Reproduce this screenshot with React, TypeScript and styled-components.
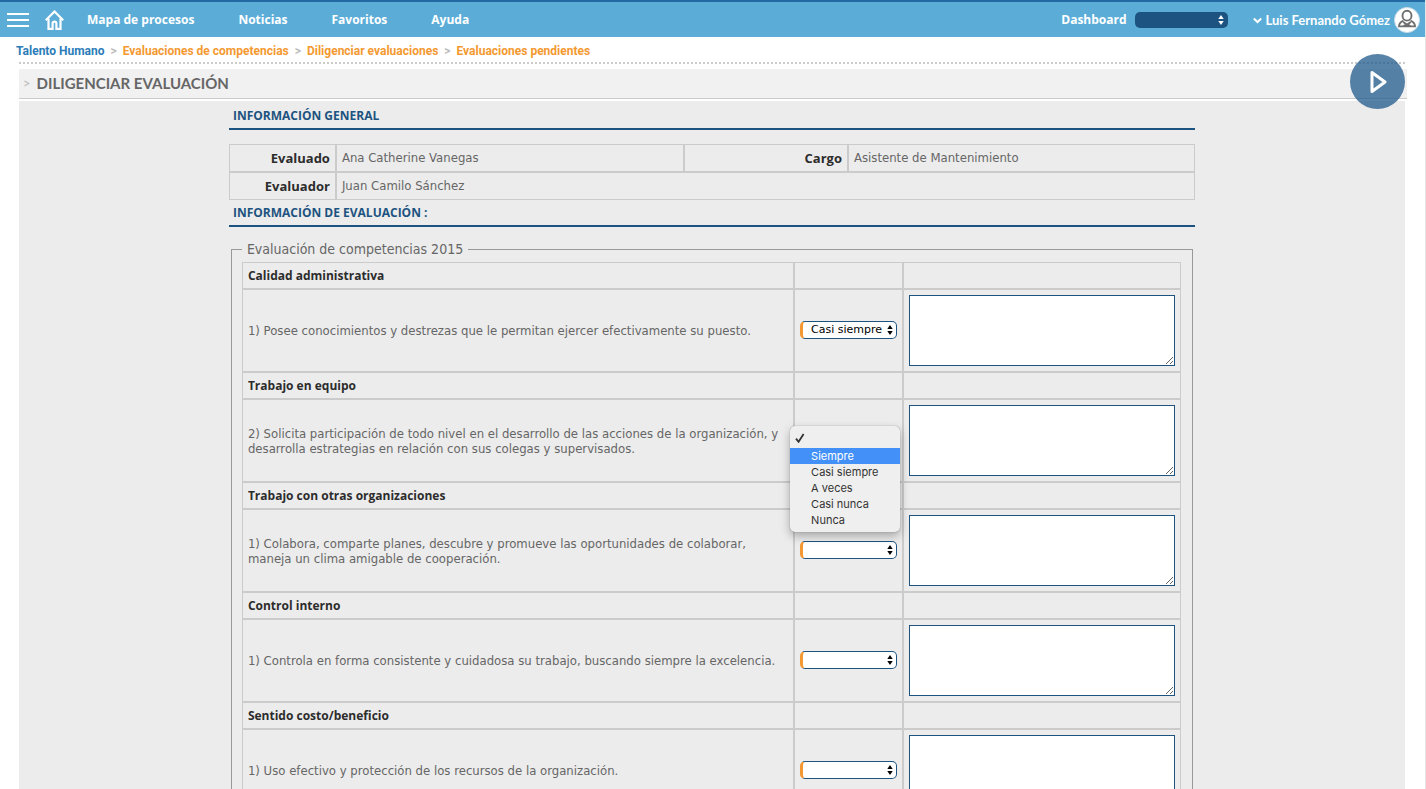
import React, { useState } from 'react';
import styled, { createGlobalStyle } from 'styled-components';

const fonts = {
  body: '"DejaVu Sans Condensed", "DejaVu Sans", sans-serif',
  strong: '"Open Sans", sans-serif',
  title: 'Lato, sans-serif',
  crumb: 'Roboto, sans-serif',
  control: '"DejaVu Sans", Verdana, sans-serif',
  menu: 'Inter, sans-serif',
};

const colors = {
  bar: '#5badd8',
  barEdge: '#2369a4',
  navy: '#1d5380',
  link: '#2b7cb8',
  orange: '#f49931',
  line: '#cbcbcb',
  panel: '#ececec',
  text: '#666666',
  dark: '#2c2c2c',
};

const GlobalStyle = createGlobalStyle`
  *, *::before, *::after { box-sizing: border-box; }
  body { margin: 0; background: #fff; }
`;

const Page = styled.div`
  position: relative;
  height: 100vh;
  overflow-x: hidden;
  overflow-y: auto;
  scrollbar-width: none;
  border-right: 1px solid #e4e4e4;
  font: 13px/15px ${fonts.body};
  color: ${colors.text};
`;

const TopBar = styled.header`
  display: flex;
  align-items: center;
  justify-content: space-between;
  height: 37px;
  padding: 1px 5px 0 7px;
  border-top: 2px solid ${colors.barEdge};
  background: ${colors.bar};
  color: #fff;
  font: 700 13px/16px ${fonts.title};
`;

const BarGroup = styled.div`
  display: flex;
  align-items: center;
`;

const IconButton = styled.button`
  display: flex;
  margin: 0 16px 0 0;
  padding: 0;
  border: 0;
  background: none;
  color: #fff;
  cursor: pointer;
`;

const Nav = styled.nav`
  display: flex;
  gap: 44px;
  padding-left: 7px;
  font: 700 12px/16px ${fonts.strong};
`;

const NavLink = styled.a`
  color: #fff;
  text-decoration: none;
`;

const DashboardLabel = styled.label`
  margin-right: 8px;
  font: 700 12px/16px ${fonts.strong};
`;

const SelectBox = styled.span<{ $width: number }>`
  position: relative;
  display: flex;
  width: ${({ $width }) => $width}px;
`;

const AnswerBox = styled(SelectBox)`
  margin-bottom: 2px;
`;

const DashboardSelect = styled.select`
  appearance: none;
  width: 100%;
  height: 16px;
  margin: 0;
  border: 0;
  border-radius: 5px;
  background: ${colors.navy};
  color: #fff;
  font: 11px/16px ${fonts.control};
`;

const AnswerSelect = styled.select`
  appearance: none;
  width: 100%;
  height: 18px;
  margin: 0;
  padding: 0 0 0 8px;
  border: 1px solid ${colors.navy};
  border-left: 3px solid ${colors.orange};
  border-radius: 5px;
  background: #fff;
  color: #000;
  font: 11px/16px ${fonts.control};
`;

const ArrowsSvg = styled.svg`
  position: absolute;
  top: 50%;
  right: 4px;
  transform: translateY(-50%);
  pointer-events: none;
`;

const UserButton = styled.button`
  display: flex;
  align-items: center;
  gap: 4px;
  margin: 0 0 0 25px;
  padding: 0;
  border: 0;
  background: none;
  color: #fff;
  font: 700 13px/16px ${fonts.title};
  cursor: pointer;
`;

const Breadcrumb = styled.nav`
  display: flex;
  gap: 6px;
  height: 27px;
  margin: 0 20px 0 19px;
  padding-top: 5px;
  border-bottom: 2px dotted ${colors.line};
  color: #bdbdbd;
  font: 700 12px/18px ${fonts.crumb};
`;

const Crumb = styled.a<{ $root?: boolean }>`
  margin-left: ${({ $root }) => ($root ? -3 : 0)}px;
  color: ${({ $root }) => ($root ? colors.link : colors.orange)};
  text-decoration: none;
`;

const TitleBar = styled.div`
  display: flex;
  align-items: center;
  gap: 6px;
  height: 30px;
  margin: 5px 18px 2px 19px;
  padding: 0 0 2px 4px;
  border-bottom: 1px solid ${colors.line};
  background: #f1f1f1;
  color: #c4c4c4;
  font: 700 13px/18px ${fonts.title};
`;

const Title = styled.h1`
  margin: 0;
  color: ${colors.text};
  font: 700 15px/20px ${fonts.title};
`;

const Panel = styled.main`
  margin: 0 20px 0 19px;
  padding-top: 2px;
  background: ${colors.panel};
`;

const Content = styled.div`
  width: 70%;
  margin: 0 auto;
  padding: 0 2px 12px;
`;

const SectionTitle = styled.h2`
  height: 27px;
  margin: 0;
  padding: 5px 4px 0;
  border-bottom: 2px solid ${colors.navy};
  color: ${colors.navy};
  font: 700 12px/16px ${fonts.strong};
`;

const GridTable = styled.table`
  width: 100%;
  table-layout: fixed;
  border-collapse: separate;
  border-spacing: 0;
  border: 0;
`;

const InfoTable = styled(GridTable)`
  margin-top: 14px;
`;

const Col = styled.col<{ $width?: string }>`
  width: ${({ $width }) => $width ?? 'auto'};
`;

const Cell = styled.td`
  padding: 5px;
  border: 1px solid ${colors.line};
  vertical-align: middle;
`;

const InfoCell = styled(Cell)`
  height: 28px;
  padding: 4px 5px 6px;
`;

const InfoLabel = styled.th`
  height: 28px;
  padding: 5px;
  border: 1px solid ${colors.line};
  color: ${colors.dark};
  text-align: right;
  font: 700 13px/16px ${fonts.strong};
`;

const Evaluation = styled.fieldset`
  min-width: 0;
  margin: 14px 2px 0;
  padding: 5px 11px 10px 10px;
  border: 1px solid #999;
`;

const Legend = styled.legend`
  padding: 0 5px;
  font: 14px/16px ${fonts.body};
`;

const CategoryCell = styled.th`
  height: 27px;
  padding: 5px;
  border: 1px solid ${colors.line};
  color: ${colors.dark};
  text-align: left;
  font: 700 12px/15px ${fonts.strong};
`;

const Comment = styled.textarea`
  display: block;
  width: 100%;
  height: 71px;
  margin: 0;
  padding: 2px;
  border: 1px solid ${colors.navy};
  border-radius: 0;
  background: #fff;
  font: 11px/14px ${fonts.control};
`;

const Menu = styled.ul`
  position: absolute;
  z-index: 2;
  top: -5px;
  left: -10px;
  width: 110px;
  margin: 0;
  padding: 2px 0 4px;
  border-radius: 5px;
  background: #efefef;
  box-shadow: 0 0 1px rgba(0, 0, 0, 0.45), 0 4px 10px rgba(0, 0, 0, 0.3);
  color: #333;
  font: 11px/16px ${fonts.menu};
  list-style: none;
`;

const MenuItem = styled.li<{ $active?: boolean }>`
  display: flex;
  align-items: center;
  height: 16px;
  padding-left: 21px;
  background: ${({ $active }) => ($active ? '#4391f8' : 'transparent')};
  color: ${({ $active }) => ($active ? '#fff' : 'inherit')};
`;

const CheckItem = styled(MenuItem)`
  height: 20px;
  padding-left: 5px;
`;

const NextButton = styled.button`
  position: absolute;
  z-index: 3;
  top: 54px;
  right: 20px;
  display: flex;
  align-items: center;
  justify-content: center;
  width: 55px;
  height: 55px;
  padding: 0;
  border: 0;
  border-radius: 50%;
  background: rgba(31, 90, 139, 0.75);
  cursor: pointer;
`;

function Arrows({ color }: { color: string }) {
  return (
    <ArrowsSvg width="6" height="10" viewBox="0 0 6 10" fill={color} aria-hidden="true">
      <path d="M3 0 5.700 4H.3zM3 10 .3 6h5.400z" />
    </ArrowsSvg>
  );
}

const answers = ['Siempre', 'Casi siempre', 'A veces', 'Casi nunca', 'Nunca'];

const crumbs = ['Talento Humano', 'Evaluaciones de competencias', 'Diligenciar evaluaciones', 'Evaluaciones pendientes'];

const questions = [
  {
    category: 'Calidad administrativa',
    text: '1) Posee conocimientos y destrezas que le permitan ejercer efectivamente su puesto.',
    answer: 'Casi siempre',
  },
  {
    category: 'Trabajo en equipo',
    text: '2) Solicita participación de todo nivel en el desarrollo de las acciones de la organización, y desarrolla estrategias en relación con sus colegas y supervisados.',
    answer: '',
    open: true,
  },
  {
    category: 'Trabajo con otras organizaciones',
    text: '1) Colabora, comparte planes, descubre y promueve las oportunidades de colaborar, maneja un clima amigable de cooperación.',
    answer: '',
  },
  {
    category: 'Control interno',
    text: '1) Controla en forma consistente y cuidadosa su trabajo, buscando siempre la excelencia.',
    answer: '',
  },
  {
    category: 'Sentido costo/beneficio',
    text: '1) Uso efectivo y protección de los recursos de la organización.',
    answer: '',
  },
];

function Question({ index, category, text, answer, open }: {
  index: number;
  category: string;
  text: string;
  answer: string;
  open?: boolean;
}) {
  const [value, setValue] = useState(answer);
  const id = `respuesta-${index}`;
  return (
    <>
      <tr>
        <CategoryCell scope="row">{category}</CategoryCell>
        <Cell />
        <Cell />
      </tr>
      <tr>
        <Cell>
          <label htmlFor={id}>{text}</label>
        </Cell>
        <Cell>
          <AnswerBox $width={97}>
            <AnswerSelect id={id} value={value} onChange={(e) => setValue(e.target.value)}>
              <option value="" />
              {answers.map((a) => (
                <option key={a}>{a}</option>
              ))}
            </AnswerSelect>
            <Arrows color="#000" />
            {open && (
              <Menu role="listbox" aria-label={category}>
                <CheckItem role="option" aria-selected="true" aria-label="Sin respuesta">
                  <svg width="10" height="10" viewBox="0 0 10 10" fill="none" stroke="#333" strokeWidth="1.8" aria-hidden="true">
                    <path d="M1 5.6 3.6 8.8 8.6 1" />
                  </svg>
                </CheckItem>
                {answers.map((a, i) => (
                  <MenuItem key={a} role="option" aria-selected="false" $active={i === 0}>
                    {a}
                  </MenuItem>
                ))}
              </Menu>
            )}
          </AnswerBox>
        </Cell>
        <Cell>
          <Comment aria-label={`Comentario: ${category}`} />
        </Cell>
      </tr>
    </>
  );
}

export default function App() {
  return (
    <Page>
      <GlobalStyle />
      <TopBar>
        <BarGroup>
          <IconButton aria-label="Menú">
            <svg width="22" height="16" viewBox="0 0 22 16" fill="currentColor" aria-hidden="true">
              <path d="M0 1h22v2H0zM0 7h22v2H0zM0 13h22v2H0z" />
            </svg>
          </IconButton>
          <IconButton aria-label="Inicio">
            <svg width="19" height="20" viewBox="0 0 19 20" fill="none" stroke="currentColor" strokeWidth="2.2" aria-hidden="true">
              <path d="M.8 10.200 9.500 1.500l8.700 8.700" />
              <path d="M3.500 8.500V18.800H7.600V13.500q0-1.800 1.900-1.800t1.900 1.800V18.800h4.100V8.500" />
            </svg>
          </IconButton>
          <Nav>
            {['Mapa de procesos', 'Noticias', 'Favoritos', 'Ayuda'].map((n) => (
              <NavLink key={n} href="#">{n}</NavLink>
            ))}
          </Nav>
        </BarGroup>
        <BarGroup>
          <DashboardLabel htmlFor="dashboard">Dashboard</DashboardLabel>
          <SelectBox $width={93}>
            <DashboardSelect id="dashboard">
              <option />
            </DashboardSelect>
            <Arrows color="#fff" />
          </SelectBox>
          <UserButton>
            <svg width="9" height="8" viewBox="0 0 9 8" fill="none" stroke="#fff" strokeWidth="2" aria-hidden="true">
              <path d="m.8 2.500 3.700 3.500 3.700-3.500" />
            </svg>
            Luis Fernando Gómez
            <svg width="26" height="26" viewBox="0 0 26 26" aria-hidden="true">
              <circle cx="13" cy="13" r="12.5" fill="#fff" stroke="#c9dbe6" />
              <g fill="none" stroke="#6f6f6f" strokeWidth="1.9">
                <ellipse cx="13" cy="8.700" rx="4.500" ry="4.900" />
                <path d="M9.500 13.600C6 15 5 16.300 5 19.400h16c0-3.100-1-4.400-4.500-5.800" />
                <path d="m9.300 15 3.700 2.700 3.700-2.700M9.500 19l3.500-1.600 3.500 1.600" />
              </g>
            </svg>
          </UserButton>
        </BarGroup>
      </TopBar>
      <Breadcrumb aria-label="Ruta">
        {crumbs.map((c, i) => (
          <React.Fragment key={c}>
            {i > 0 && <span>&gt;</span>}
            <Crumb href="#" $root={i === 0}>{c}</Crumb>
          </React.Fragment>
        ))}
      </Breadcrumb>
      <TitleBar>
        <span>&gt;</span>
        <Title>DILIGENCIAR EVALUACIÓN</Title>
      </TitleBar>
      <Panel>
        <Content>
          <SectionTitle>INFORMACIÓN GENERAL</SectionTitle>
          <InfoTable>
            <colgroup>
              <Col $width="107px" />
              <Col $width="36%" />
              <Col $width="17%" />
              <Col />
            </colgroup>
            <tbody>
              <tr>
                <InfoLabel scope="row">Evaluado</InfoLabel>
                <InfoCell>Ana Catherine Vanegas</InfoCell>
                <InfoLabel scope="row">Cargo</InfoLabel>
                <InfoCell>Asistente de Mantenimiento</InfoCell>
              </tr>
              <tr>
                <InfoLabel scope="row">Evaluador</InfoLabel>
                <InfoCell colSpan={3}>Juan Camilo Sánchez</InfoCell>
              </tr>
            </tbody>
          </InfoTable>
          <SectionTitle>INFORMACIÓN DE EVALUACIÓN :</SectionTitle>
          <Evaluation>
            <Legend>Evaluación de competencias 2015</Legend>
            <GridTable>
              <colgroup>
                <Col />
                <Col $width="109px" />
                <Col $width="278px" />
              </colgroup>
              <tbody>
                {questions.map((q, i) => (
                  <Question key={q.category} index={i} {...q} />
                ))}
              </tbody>
            </GridTable>
          </Evaluation>
        </Content>
      </Panel>
      <NextButton aria-label="Siguiente">
        <svg width="18" height="24" viewBox="0 0 18 24" fill="none" stroke="#fff" strokeWidth="3" strokeLinejoin="round" aria-hidden="true">
          <path d="M3 2.500v19l13-9.500z" />
        </svg>
      </NextButton>
    </Page>
  );
}
